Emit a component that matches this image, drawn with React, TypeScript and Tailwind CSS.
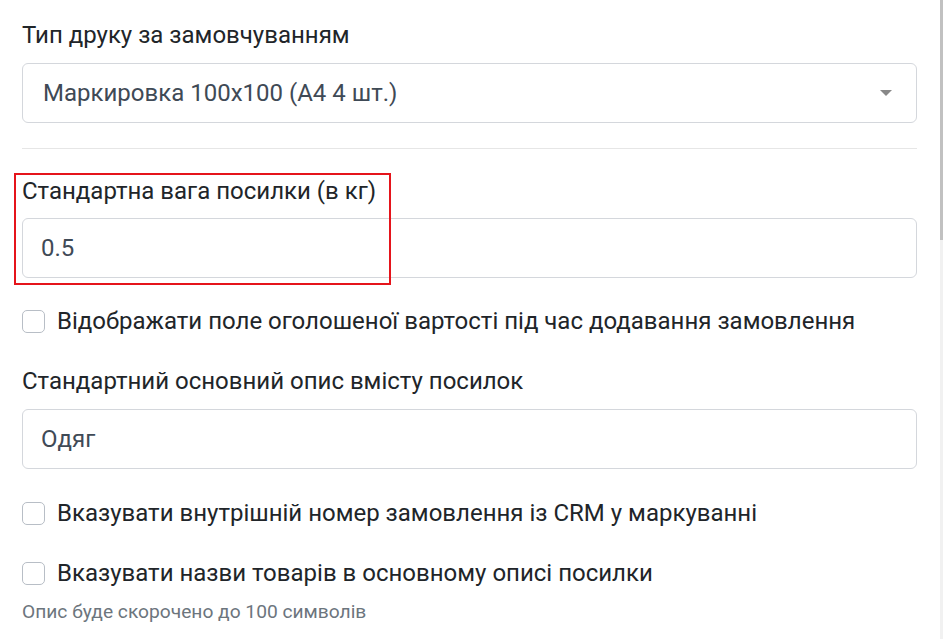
import React from 'react';

function Checkbox({ label }: { label: string }) {
  return (
    <label className="flex h-[30px] items-center gap-[12px]">
      <span className="h-[23px] w-[23px] shrink-0 rounded-[5px] border border-[#b8bec6] bg-white" />
      <span className="text-[24px] leading-[30px] text-[#212529]">{label}</span>
    </label>
  );
}

export default function App() {
  return (
    <div className="flex h-[639px] w-[943px] overflow-hidden bg-white font-['Roboto',sans-serif]">
      <div className="flex-1 pl-[22px] pr-[23px] pt-[20px]">
        <div className="text-[24px] leading-[30px] text-[#212529]">Тип друку за замовчуванням</div>
        <div className="mt-[13px] flex h-[60px] items-center justify-between rounded-[6px] border border-[#d4d7dc] pl-[20px] pr-[24px]">
          <span className="text-[24px] text-[#3f4a56]">Маркировка 100x100 (А4 4 шт.)</span>
          <span className="h-0 w-0 border-x-[6px] border-t-[6px] border-x-transparent border-t-[#888]" />
        </div>
        <div className="mt-[25px] h-px bg-[#e6e6e6]" />

        <div className="relative mt-[27px]">
          <div className="pointer-events-none absolute left-[-8px] top-[-3px] h-[112px] w-[377px] border-2 border-[#e5141b]" />
          <div className="text-[24px] leading-[30px] text-[#212529]">Стандартна вага посилки (в кг)</div>
          <div className="mt-[12px] flex h-[60px] items-center rounded-[6px] border border-[#d4d7dc] pl-[18px] text-[24px] text-[#3f4a56]">
            0.5
          </div>
        </div>

        <div className="mt-[28px]">
          <Checkbox label="Відображати поле оголошеної вартості під час додавання замовлення" />
        </div>

        <div className="mt-[30px] text-[24px] leading-[30px] text-[#212529]">Стандартний основний опис вмісту посилок</div>
        <div className="mt-[13px] flex h-[60px] items-center rounded-[6px] border border-[#d4d7dc] pl-[18px] text-[24px] text-[#3f4a56]">
          Одяг
        </div>

        <div className="mt-[29px]">
          <Checkbox label="Вказувати внутрішній номер замовлення із CRM у маркуванні" />
        </div>
        <div className="mt-[30px]">
          <Checkbox label="Вказувати назви товарів в основному описі посилки" />
        </div>
        <div className="mt-[12px] text-[19.2px] leading-[24px] text-[#6c757d]">Опис буде скорочено до 100 символів</div>
      </div>
      <div className="flex w-[3px] flex-col bg-[#f1f1f1]">
        <div className="h-[240px] bg-[#c1c1c1]" />
      </div>
    </div>
  );
}
